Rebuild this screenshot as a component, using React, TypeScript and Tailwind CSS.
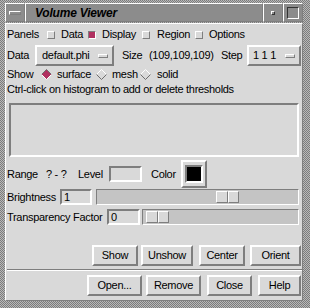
import React from "react";

const F = "font-['Liberation_Sans',Arial,sans-serif] text-[11px] tracking-[-0.3px] text-black leading-none";
const RAISED = "border-t-white border-l-white border-b-[#7e7e7e] border-r-[#7e7e7e]";
const SUNKEN = "border-t-[#7e7e7e] border-l-[#7e7e7e] border-b-white border-r-white";

function Check({ on }: { on?: boolean }) {
  return (
    <span
      className={`inline-block w-[8px] h-[8px] shrink-0 border ${
        on ? `bg-[#b03060] ${SUNKEN}` : `bg-[#d9d9d9] ${RAISED}`
      }`}
    />
  );
}

function Diamond({ on }: { on?: boolean }) {
  return (
    <svg width="11" height="11" viewBox="0 0 11 11" className="shrink-0">
      <polygon points="5.5,0.5 10.5,5.5 5.5,10.5 0.5,5.5" fill={on ? "#b03060" : "#d9d9d9"} />
      <polyline points="0.5,5.5 5.5,0.5 10.5,5.5" fill="none" stroke={on ? "#6e6e6e" : "#ffffff"} strokeWidth="1" />
      <polyline points="0.5,5.5 5.5,10.5 10.5,5.5" fill="none" stroke={on ? "#ffffff" : "#6e6e6e"} strokeWidth="1" />
    </svg>
  );
}

function Dash() {
  return <span className={`inline-block w-[10px] h-[4px] border bg-[#d9d9d9] ${RAISED}`} />;
}

function Btn({ label, w, ml }: { label: string; w: string; ml: string }) {
  return (
    <div className={`${w} ${ml} h-[21px] border-2 ${RAISED} bg-[#d9d9d9] flex items-center justify-center ${F}`}>
      {label}
    </div>
  );
}

function Slider({ w, ml }: { w: string; ml: string }) {
  return (
    <div className={`${w} h-[16px] border ${SUNKEN} bg-[#c4c4c4] flex items-center`}>
      <div className={`${ml} w-[23px] h-[12px] flex`}>
        <div className={`w-[12px] h-full border ${RAISED} bg-[#d9d9d9] border-r-[#7e7e7e]`} />
        <div className={`w-[11px] h-full border ${RAISED} bg-[#d9d9d9]`} />
      </div>
    </div>
  );
}

export default function App() {
  return (
    <div className="w-[310px] h-[308px] bg-[repeating-conic-gradient(#b8b8b8_0%_25%,#7c7c7c_0%_50%)] bg-[length:2px_2px] pl-[5px] pr-[7px] pt-[3px] pb-[7px] flex flex-col">
      {/* title bar */}
      <div className="h-[19px] flex shrink-0">
        <div className={`w-[20px] h-full border ${RAISED} bg-[#8c8c8c] flex items-center justify-center`}>
          <span className={`inline-block w-[12px] h-[4px] border bg-[#8c8c8c] ${RAISED}`} />
        </div>
        <div className={`flex-1 h-full border ${RAISED} bg-[#8c8c8c] flex items-center pl-[9px]`}>
          <span className="font-['Liberation_Sans',Arial,sans-serif] text-[12px] font-bold italic tracking-[-0.2px] text-black leading-none">
            Volume Viewer
          </span>
        </div>
        <div className={`w-[20px] h-full border ${RAISED} bg-[#8c8c8c] flex items-center justify-center`}>
          <span className={`inline-block w-[4px] h-[4px] border bg-[#8c8c8c] ${RAISED} border-t-[#333] border-l-[#333] border-b-[#333] border-r-[#333]`} />
        </div>
        <div className={`w-[20px] h-full border ${RAISED} bg-[#8c8c8c] flex items-center justify-center`}>
          <span className={`inline-block w-[12px] h-[12px] border ${SUNKEN} border-t-[#333] border-l-[#333] bg-[#8c8c8c]`} />
        </div>
      </div>

      {/* body */}
      <div className="mt-[1px] flex-1 bg-[#d9d9d9] border-l border-t border-white border-r border-r-[#7e7e7e] border-b border-b-[#7e7e7e] flex flex-col pl-[1px]">
        {/* Panels row */}
        <div className={`h-[21px] flex items-center ${F}`}>
          <span className="w-[40px]">Panels</span>
          <Check />
          <span className="ml-[6px] w-[27px]">Data</span>
          <Check on />
          <span className="ml-[6px] w-[40px]">Display</span>
          <Check />
          <span className="ml-[7px] w-[38px]">Region</span>
          <Check />
          <span className="ml-[6px]">Options</span>
        </div>
        {/* Data row */}
        <div className={`h-[21px] flex items-center ${F}`}>
          <span className="w-[28px]">Data</span>
          <div className={`w-[79px] h-[21px] border-2 ${RAISED} flex items-center justify-between pl-[5px] pr-[4px]`}>
            <span>default.phi</span>
            <Dash />
          </div>
          <span className="ml-[8px] w-[27px]">Size</span>
          <span className="w-[72px]">(109,109,109)</span>
          <span className="w-[26px]">Step</span>
          <div className={`w-[54px] h-[21px] border-2 ${RAISED} flex items-center justify-between pl-[4px] pr-[4px]`}>
            <span>1 1 1</span>
            <Dash />
          </div>
        </div>
        {/* Show row */}
        <div className={`h-[16px] flex items-center ${F}`}>
          <span className="w-[34px]">Show</span>
          <Diamond on />
          <span className="ml-[5px] w-[39px]">surface</span>
          <Diamond />
          <span className="ml-[5px] w-[28px]">mesh</span>
          <Diamond />
          <span className="ml-[6px]">solid</span>
        </div>
        {/* hint */}
        <div className={`h-[14px] flex items-center ${F}`}>Ctrl-click on histogram to add or delete thresholds</div>
        {/* histogram */}
        <div className={`mt-[7px] ml-[2px] mr-[3px] h-[54px] border-2 ${SUNKEN} bg-[#d9d9d9]`} />
        {/* Range row */}
        <div className={`mt-[3px] h-[28px] flex items-center ${F}`}>
          <span className="w-[39px]">Range</span>
          <span className="w-[32px]">? - ?</span>
          <span className="w-[31px]">Level</span>
          <div className={`w-[33px] h-[16px] border-2 ${SUNKEN}`} />
          <span className="ml-[9px] w-[30px]">Color</span>
          <div className={`w-[26px] h-[28px] border-2 ${RAISED} flex items-center justify-center`}>
            <div className={`w-[18px] h-[18px] border-2 ${SUNKEN} border-t-[#5a5a5a] border-l-[#5a5a5a] bg-black`} />
          </div>
        </div>
        {/* Brightness */}
        <div className={`mt-[1px] h-[16px] flex items-center ${F}`}>
          <span className="w-[53px]">Brightness</span>
          <div className={`w-[32px] h-[16px] border-2 ${SUNKEN} flex items-center pl-[2px]`}>1</div>
          <div className="ml-[4px]">
            <Slider w="w-[203px]" ml="ml-[119px]" />
          </div>
        </div>
        {/* Transparency */}
        <div className={`mt-[4px] h-[16px] flex items-center ${F}`}>
          <span className="w-[100px]">Transparency Factor</span>
          <div className={`w-[33px] h-[16px] border-2 ${SUNKEN} flex items-center pl-[2px]`}>0</div>
          <div className="ml-[2px]">
            <Slider w="w-[157px]" ml="ml-[3px]" />
          </div>
        </div>
        {/* Buttons row 1 */}
        <div className="mt-[20px] flex justify-end pr-[1px]">
          <Btn label="Show" w="w-[46px]" ml="ml-0" />
          <Btn label="Unshow" w="w-[52px]" ml="ml-[3px]" />
          <Btn label="Center" w="w-[46px]" ml="ml-[6px]" />
          <Btn label="Orient" w="w-[51px]" ml="ml-[5px]" />
        </div>
        {/* separator */}
        <div className="mt-[3px] h-[2px] border-t border-t-[#7e7e7e] border-b border-b-white" />
        {/* Buttons row 2 */}
        <div className="mt-[4px] flex justify-end pr-[1px]">
          <Btn label="Open..." w="w-[55px]" ml="ml-0" />
          <Btn label="Remove" w="w-[55px]" ml="ml-[4px]" />
          <Btn label="Close" w="w-[45px]" ml="ml-[6px]" />
          <Btn label="Help" w="w-[43px]" ml="ml-[6px]" />
        </div>
      </div>
    </div>
  );
}
